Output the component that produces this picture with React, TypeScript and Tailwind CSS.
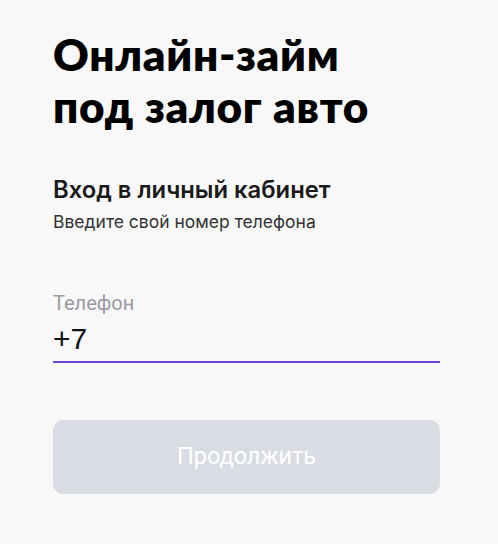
export default function App() {
  return (
    <div className="min-h-[544px] w-[498px] bg-[#f8f8f8]">
      <div className="flex flex-col pl-[53px] pr-[58px] pt-[28px]">
        <h1 className="text-[44px] leading-[52px] font-[800] text-black tracking-[0.7px] [font-family:Lato,sans-serif]">
          Онлайн-займ<br />под залог авто
        </h1>
        <div className="mt-[44px] text-[23.8px] leading-[28px] font-semibold text-[#1a1a1a] [font-family:Inter,sans-serif]">
          Вход в личный кабинет
        </div>
        <div className="mt-[7px] text-[17.5px] leading-[22px] text-[#333] [font-family:Inter,sans-serif]">
          Введите свой номер телефона
        </div>
        <div className="mt-[58px] text-[20px] leading-[24px] text-[#9a9aa2] [font-family:Roboto,sans-serif]">
          Телефон
        </div>
        <div className="mt-[7px] h-[39px] text-[30px] leading-[34px] text-[#111] [font-family:'Liberation_Sans',sans-serif]">
          +7
        </div>
        <div className="h-[1.5px] w-full bg-[#6e45d0]" />
        <button className="mt-[57.5px] flex h-[74px] w-full items-center justify-center rounded-[10px] bg-[#d9dce3] text-[23.5px] text-white [font-family:Roboto,sans-serif]">
          Продолжить
        </button>
      </div>
    </div>
  );
}
